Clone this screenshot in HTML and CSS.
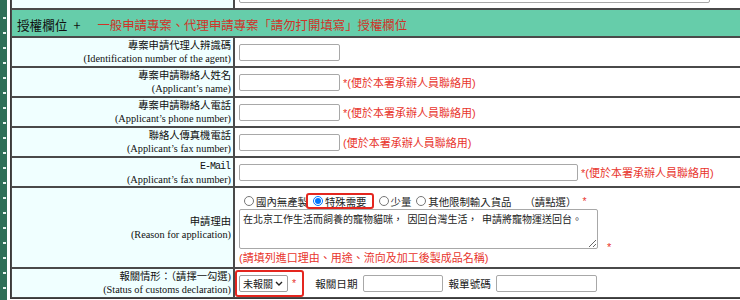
FILE: index.html
```html
<!DOCTYPE html>
<html lang="zh-Hant">
<head>
  <meta charset="UTF-8" />
  <meta name="viewport" content="width=device-width, initial-scale=1.0" />
  <title>授權欄位</title>
  <link rel="stylesheet" href="styles.css">
</head>
<body>
  <div class="page">
    <div class="side-bar"></div>

    <table class="form-table">
      <colgroup>
        <col class="col-label">
        <col>
      </colgroup>

      <!-- previous row, scrolled mostly out of view -->
      <tr>
        <td class="label"></td>
        <td class="value"><input type="text" class="field field-wide"></td>
      </tr>

      <tr class="row-head">
        <td colspan="2"><span class="head-title">授權欄位</span><span class="head-plus">+</span><span class="head-note">一般申請專案、代理申請專案「請勿打開填寫」授權欄位</span></td>
      </tr>

      <tr>
        <td class="label">專案申請代理人辨識碼<br><span class="en">(Identification number of the agent)</span></td>
        <td class="value"><input type="text" class="field"></td>
      </tr>
      <tr>
        <td class="label">專案申請聯絡人姓名<br><span class="en">(Applicant’s name)</span></td>
        <td class="value"><input type="text" class="field"><span class="note">*(便於本署承辦人員聯絡用)</span></td>
      </tr>
      <tr>
        <td class="label">專案申請聯絡人電話<br><span class="en">(Applicant’s phone number)</span></td>
        <td class="value"><input type="text" class="field"><span class="note">*(便於本署承辦人員聯絡用)</span></td>
      </tr>
      <tr>
        <td class="label">聯絡人傳真機電話<br><span class="en">(Applicant’s fax number)</span></td>
        <td class="value"><input type="text" class="field"><span class="note">(便於本署承辦人員聯絡用)</span></td>
      </tr>
      <tr>
        <td class="label"><span class="mono">E-Mail</span><br><span class="en">(Applicant’s fax number)</span></td>
        <td class="value"><input type="text" class="field field-mail"><span class="note">*(便於本署承辦人員聯絡用)</span></td>
      </tr>

      <tr class="row-reason">
        <td class="label">申請理由<br><span class="en">(Reason for application)</span></td>
        <td class="value value-reason">
          <div class="radio-line">
            <label class="opt"><input type="radio" name="reason">國內無產製</label>
            <span class="mark-box mark-radio"><label class="opt"><input type="radio" name="reason" checked>特殊需要</label></span>
            <label class="opt"><input type="radio" name="reason">少量</label>
            <label class="opt"><input type="radio" name="reason">其他限制輸入貨品</label>
            <span class="hint">（請點選）</span><span class="star">*</span>
          </div>
          <div class="reason-line">
            <textarea class="reason-text">在北京工作生活而飼養的寵物貓咪，  因回台灣生活，  申請將寵物運送回台。</textarea><span class="star star-low">*</span>
          </div>
          <div class="note note-block">(請填列進口理由、用途、流向及加工後製成品名稱)</div>
        </td>
      </tr>

      <tr>
        <td class="label">報關情形：（請擇一勾選)<br><span class="en">(Status of customs declaration)</span></td>
        <td class="value">
          <div class="customs-line">
            <span class="mark-box mark-select">
              <select class="status-select">
                <option>未報關</option>
                <option>已報關</option>
              </select><span class="star">*</span>
            </span>
            <span class="field-label">報關日期</span><input type="text" class="field field-date">
            <span class="field-label">報單號碼</span><input type="text" class="field">
          </div>
        </td>
      </tr>
    </table>
  </div>
</body>
</html>
```

FILE: styles.css
```css
* { box-sizing: border-box; margin: 0; padding: 0; }

html, body {
  height: 100%;
  background: #fff;
  overflow: hidden;
}

body {
  font-family: "Liberation Serif", "Noto Sans CJK TC", serif;
  color: #111;
}

.page {
  display: flex;
  align-items: flex-start;
  height: 100%;
}

.side-bar {
  flex: none;
  width: 7px;
  height: 100%;
  background-color: #2f6f57;
  background-image: repeating-linear-gradient(to bottom, transparent 0 13px, #e8f2ee 13px 15px);
  background-size: 3px 100%;
  background-position: 3px 4px;
  background-repeat: no-repeat;
}

.form-table {
  flex: none;
  width: 800px;
  margin: -22px 0 0 3px;
  table-layout: fixed;
  border-collapse: separate;
  border-spacing: 0;
  border: 1px solid #3a3a3a;
}

.col-label { width: 223px; }

td {
  border: 1px solid #4a4a4a;
  height: 30px;
  vertical-align: middle;
}

/* header */
.row-head td {
  height: 28px;
  background: #66cdaa;
  padding-left: 5px;
  font-family: "Noto Sans CJK TC", sans-serif;
  white-space: nowrap;
}

.head-title {
  font-size: 12.6px;
  color: #111;
}

.head-plus {
  margin-left: 6px;
  font-size: 12.6px;
  color: #111;
}

.head-note {
  margin-left: 17px;
  font-size: 12.4px;
  color: #cf3429;
}

/* labels */
.label {
  background: #f0ffff;
  text-align: right;
  padding-right: 2px;
  font-size: 10.3px;
  line-height: 13px;
  white-space: nowrap;
}

.mono {
  font-family: "Liberation Mono", monospace;
  font-size: 10px;
  letter-spacing: -1px;
  margin-right: 1px;
}

/* values */
.value {
  padding-left: 4px;
  font-family: "Liberation Sans", "Noto Sans CJK TC", sans-serif;
  font-size: 11px;
  white-space: nowrap;
}

.field {
  width: 101px;
  height: 17px;
  border: 1px solid #a8a8a8;
  border-radius: 2px;
  background: #fff;
  vertical-align: middle;
}

.field-wide { width: 471px; }
.field-mail { width: 339px; }
.field-date { width: 80px; }

.note {
  margin-left: 3px;
  color: #e8342c;
  font-size: 11px;
  vertical-align: middle;
}

.star { color: #e8342c; }

/* reason row */
.row-reason td { height: 81px; }

.value-reason {
  vertical-align: top;
}

.radio-line {
  display: flex;
  align-items: center;
  height: 16px;
  margin-top: 5px;
  font-size: 10.4px;
  color: #222;
}

.opt {
  display: inline-flex;
  align-items: center;
}

.opt input {
  width: 10px;
  height: 10px;
  margin: 0 2px 0 5px;
}

.mark-box {
  display: inline-flex;
  align-items: center;
  border: 2px solid #e4261f;
  border-radius: 3px;
}

.mark-radio {
  height: 16px;
  margin-left: -2px;
  padding: 0 5px 0 2px;
}

.mark-radio .opt input { margin-left: 3px; }

.hint { margin-left: 13px; }
.radio-line .star { margin-left: 6px; }

.reason-line {
  display: flex;
  align-items: flex-end;
}

.reason-text {
  width: 359px;
  height: 40px;
  padding: 2px 3px;
  border: 1px solid #a8a8a8;
  border-radius: 2px;
  font-family: "Noto Sans CJK TC", sans-serif;
  font-size: 10px;
  line-height: 13px;
  color: #222;
  resize: both;
}

.star-low {
  margin: 0 0 -4px 9px;
}

.note-block {
  margin: 2px 0 0;
  line-height: 14px;
}

/* customs row */
.customs-line {
  display: flex;
  align-items: center;
  margin-left: -4px;
  font-size: 10.6px;
  color: #222;
}

.mark-select {
  height: 27px;
  padding: 0 6px 0 2px;
}

.status-select {
  appearance: none;
  -webkit-appearance: none;
  width: 49px;
  height: 17px;
  padding: 0 0 0 3px;
  border: 1px solid #a0a0a0;
  border-radius: 2px;
  background: #fff url("data:image/svg+xml,%3Csvg xmlns='http://www.w3.org/2000/svg' viewBox='0 0 8 5'%3E%3Cpath d='M1 1l3 3 3-3' fill='none' stroke='%23222' stroke-width='1.4'/%3E%3C/svg%3E") no-repeat right 4px center / 8px 5px;
  font-family: "Noto Sans CJK TC", sans-serif;
  font-size: 10px;
  color: #222;
}

.mark-select .star { margin-left: 4px; }

.field-label {
  margin: 0 5px 0 11px;
}

.field-label + .field-date + .field-label { margin-left: 6px; }
```
